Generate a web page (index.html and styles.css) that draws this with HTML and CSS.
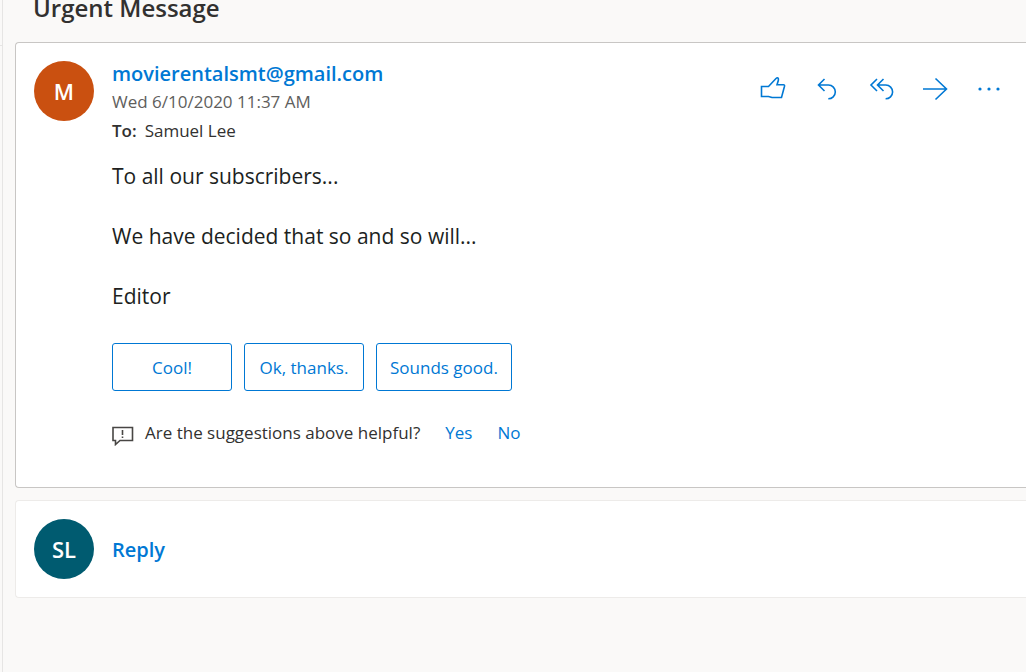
FILE: index.html
```html
<!DOCTYPE html>
<html lang="en">
<head>
<meta charset="utf-8">
<meta name="viewport" content="width=device-width, initial-scale=1">
<title>Urgent Message</title>
<link rel="stylesheet" href="styles.css">
</head>
<body>
<div class="app">
  <aside class="list-edge"><div class="list-edge-top"></div></aside>
  <main class="pane">
    <h1 class="subject">Urgent Message</h1>
    <article class="card message">
      <div class="avatar avatar-sender">M</div>
      <div class="content">
        <header class="message-head">
          <div class="meta">
            <a class="sender" href="#">movierentalsmt@gmail.com</a>
            <time class="date">Wed 6/10/2020 11:37 AM</time>
            <p class="to"><b class="to-label">To:</b><span>Samuel Lee</span></p>
          </div>
          <div class="actions">
            <button class="icon-button" type="button" aria-label="Like">
              <svg class="icon" viewBox="0 0 28 28"><path d="M2.5 12.500H9.500L17 4.500Q18.500 3 19.300 4.500Q19.500 5 19.300 6.500L18 10.800H24.500Q25.800 10.800 25.500 12.200L22.500 23.500H13L9.500 22.500H2.500Z"/></svg>
            </button>
            <button class="icon-button" type="button" aria-label="Reply">
              <svg class="icon" viewBox="0 0 28 28"><path d="M11.500 5L5.500 11L11.500 17M5.500 11H15.500A6.900 6.900 0 0 1 15.300 24.800"/></svg>
            </button>
            <button class="icon-button" type="button" aria-label="Reply all">
              <svg class="icon" viewBox="0 0 28 28"><path d="M10 5L4 11L10 17M16.500 5L10.500 11L16.500 17M10.500 11H18.800A6.900 6.900 0 0 1 18.600 24.800"/></svg>
            </button>
            <button class="icon-button" type="button" aria-label="Forward">
              <svg class="icon" viewBox="0 0 28 28"><path d="M2 15H25.500M14.500 4.500L25.500 15L14.500 25.500"/></svg>
            </button>
            <button class="icon-button" type="button" aria-label="More actions">
              <svg class="icon icon-dots" viewBox="0 0 28 28"><circle cx="5" cy="15" r="1.600"/><circle cx="14" cy="15" r="1.600"/><circle cx="23" cy="15" r="1.600"/></svg>
            </button>
          </div>
        </header>
        <div class="body">
          <p>To all our subscribers...</p>
          <p>We have decided that so and so will...</p>
          <p>Editor</p>
        </div>
        <div class="suggestions">
          <button class="suggestion" type="button">Cool!</button>
          <button class="suggestion" type="button">Ok, thanks.</button>
          <button class="suggestion" type="button">Sounds good.</button>
        </div>
        <div class="feedback">
          <svg class="feedback-icon" viewBox="0 0 22 20"><path d="M1 1.500H20.500V14.500H8L3.500 18.500V14.500H1Z"/><path d="M10.500 4V9M10.500 10.500V12"/></svg>
          <span>Are the suggestions above helpful?</span>
          <button class="link-button" type="button">Yes</button>
          <button class="link-button" type="button">No</button>
        </div>
      </div>
    </article>
    <section class="card reply-card">
      <div class="avatar avatar-me">SL</div>
      <button class="reply" type="button">Reply</button>
    </section>
  </main>
</div>
</body>
</html>
```
FILE: styles.css
```css
* { box-sizing: border-box; }

body {
  margin: 0;
  background: #faf9f8;
  color: #323130;
  font-family: "Open Sans", "Noto Sans", sans-serif;
  font-size: 17px;
}

h1, p { margin: 0; }

button {
  padding: 0;
  border: 0;
  background: none;
  color: #0078d4;
  font: inherit;
  cursor: pointer;
}

.app {
  display: flex;
  min-height: 100vh;
  overflow: hidden;
}

.list-edge {
  flex: none;
  width: 3px;
  border-right: 1px solid #e6e5e4;
}

.list-edge-top {
  height: 46px;
  border-bottom: 1px solid #e6e5e4;
}

.pane {
  flex: 1;
  min-width: 0;
  padding-left: 12px;
}

.subject {
  padding: 0 18px 26px;
  font-size: 24px;
  font-weight: 600;
  line-height: 16px;
}

.card {
  display: flex;
  gap: 18px;
  padding: 18px;
  border: 1px solid #edebe9;
  border-right: 0;
  border-radius: 4px 0 0 4px;
  background: #fff;
}

.message {
  padding-bottom: 40px;
  border-color: #c8c6c4;
}

.reply-card {
  align-items: center;
  margin-top: 12px;
}

.avatar {
  display: flex;
  flex: none;
  align-items: center;
  justify-content: center;
  width: 60px;
  height: 60px;
  border-radius: 50%;
  color: #fff;
  font-size: 22px;
  font-weight: 600;
}

.avatar-sender { background: #ca5010; }
.avatar-me { background: #005b70; }

.content {
  flex: 1;
  min-width: 0;
}

.message-head {
  display: flex;
  justify-content: space-between;
}

.meta {
  display: flex;
  flex-direction: column;
}

.sender {
  color: #0078d4;
  font-size: 20px;
  font-weight: 600;
  line-height: 26px;
  text-decoration: none;
}

.date {
  color: #605e5c;
  line-height: 30px;
}

.to {
  display: flex;
  gap: 8px;
  line-height: 28px;
}

.to-label { font-weight: 600; }

.actions {
  display: flex;
  align-items: flex-start;
  gap: 26px;
  padding-top: 13px;
  padding-right: 5px;
}

.icon-button {
  display: block;
  width: 28px;
  height: 28px;
}

.icon {
  display: block;
  width: 28px;
  height: 28px;
  fill: none;
  stroke: #0078d4;
  stroke-width: 1.6;
}

.icon-dots {
  fill: #0078d4;
  stroke: none;
}

.body {
  display: flex;
  flex-direction: column;
  gap: 30px;
  padding-top: 16px;
  color: #201f1e;
  font-size: 21px;
  line-height: 30px;
}

.suggestions {
  display: flex;
  gap: 12px;
  margin-top: 32px;
}

.suggestion {
  min-width: 120px;
  height: 48px;
  padding: 0 13px;
  border: 1px solid #0078d4;
  border-radius: 3px;
}

.feedback {
  display: flex;
  align-items: center;
  margin-top: 28px;
  line-height: 28px;
}

.feedback-icon {
  width: 22px;
  height: 20px;
  margin: 6px 11px 0 0;
  fill: none;
  stroke: #484644;
  stroke-width: 1.6;
}

.link-button { margin-left: 25px; }

.reply {
  font-size: 20px;
  font-weight: 600;
}
```
